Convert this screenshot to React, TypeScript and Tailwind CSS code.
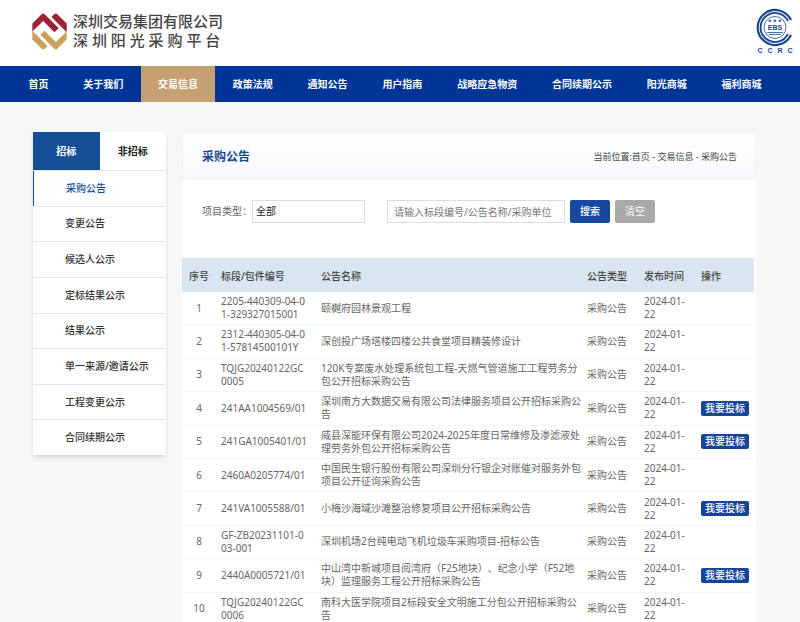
const navItems = [
  "首页",
  "关于我们",
  "交易信息",
  "政策法规",
  "通知公告",
  "用户指南",
  "战略应急物资",
  "合同续期公示",
  "阳光商城",
  "福利商城",
];

const sideItems = [
  "采购公告",
  "变更公告",
  "候选人公示",
  "定标结果公示",
  "结果公示",
  "单一来源/邀请公示",
  "工程变更公示",
  "合同续期公示",
];

type Notice = {
  code: string;
  name: string;
  open?: boolean;
};

const notices: Notice[] = [
  { code: "2205-440309-04-01-329327015001", name: "颐樾府园林景观工程" },
  { code: "2312-440305-04-01-57814500101Y", name: "深创投广场塔楼四楼公共食堂项目精装修设计" },
  { code: "TQJG20240122GC0005", name: "120K专案废水处理系统包工程-天燃气管道施工工程劳务分包公开招标采购公告" },
  { code: "241AA1004569/01", name: "深圳南方大数据交易有限公司法律服务项目公开招标采购公告", open: true },
  { code: "241GA1005401/01", name: "威县深能环保有限公司2024-2025年度日常维修及渗滤液处理劳务外包公开招标采购公告", open: true },
  { code: "2460A0205774/01", name: "中国民生银行股份有限公司深圳分行银企对账催对服务外包项目公开征询采购公告" },
  { code: "241VA1005588/01", name: "小梅沙海域沙滩整治修复项目公开招标采购公告", open: true },
  { code: "GF-ZB20231101-003-001", name: "深圳机场2台纯电动飞机垃圾车采购项目-招标公告" },
  { code: "2440A0005721/01", name: "中山湾中新城项目阅湾府（F25地块）、纪念小学（F52地块）监理服务工程公开招标采购公告", open: true },
  { code: "TQJG20240122GC0006", name: "南科大医学院项目2标段安全文明施工分包公开招标采购公告" },
];

function Logo() {
  return (
    <svg viewBox="0 0 104 112" className="h-[37px] w-[35px]" aria-hidden="true">
      <g fill="#9b2335">
        <path d="M0 32 30 2H36L80 46 67 58 33 24 0 56Z" />
        <path d="M58 12 68 2H74L104 32V58Z" />
      </g>
      <g fill="#c9a15a">
        <path d="M104 80 74 110H68L24 66 37 54 71 88 104 56Z" />
        <path d="M46 100 36 110H30L0 80V54Z" />
      </g>
    </svg>
  );
}

function CcrcBadge() {
  return (
    <svg viewBox="0 0 38 46" className="h-[46px] w-[38px]" role="img" aria-label="CCRC">
      <g fill="none" stroke="#17468f">
        <path strokeWidth="2.2" d="M35 12A17.5 17.5 0 1 0 35 27" />
        <path strokeWidth="1.8" d="M32 13A14.5 14.5 0 1 0 32 26" />
        <circle cx="19" cy="19.5" r="11" strokeWidth="0.8" />
      </g>
      <g fill="#17468f" fontFamily="Liberation Sans, sans-serif" fontWeight="bold" textAnchor="middle">
        <text x="19" y="14" fontSize="4">★ ★ ★</text>
        <text x="19" y="22" fontSize="7">EBS</text>
        <text x="4" y="45" fontSize="7">C</text>
        <text x="14" y="45" fontSize="7">C</text>
        <text x="24" y="45" fontSize="7">R</text>
        <text x="34" y="45" fontSize="7">C</text>
      </g>
      <path stroke="#17468f" strokeWidth="0.8" d="M11 24.5H27M13 26.5H25" />
    </svg>
  );
}

export default function App() {
  return (
    <div className="min-h-screen bg-[#f7f7f7] font-['Noto_Sans','Noto_Sans_CJK_SC',sans-serif] text-[10px] leading-[13px] text-[#666]">
      {/* ヘッダー */}
      <header className="flex items-center justify-between bg-white pt-2 pr-[6px] pb-3 pl-8">
        <div className="flex items-center gap-[6px]">
          <Logo />
          <div className="text-[15px] leading-[19px] font-medium text-[#444]">
            <p>深圳交易集团有限公司</p>
            <p>深 圳 阳 光 采 购 平 台</p>
          </div>
        </div>
        <CcrcBadge />
      </header>

      {/* ナビ */}
      <nav className="bg-[#003598] pr-[21px] pl-[11px]">
        <ul className="flex">
          {navItems.map((item) => (
            <li key={item} className="flex-auto">
              <a
                href="#"
                className={`block px-[17px] text-center leading-9 font-bold whitespace-nowrap text-white ${
                  item === "交易信息" ? "bg-[#c5a072]" : ""
                }`}
              >
                {item}
              </a>
            </li>
          ))}
        </ul>
      </nav>

      <div className="flex items-start gap-4 pt-[30px] pr-11 pl-[33px]">
        {/* サイドメニュー */}
        <aside className="w-[133px] shrink-0 bg-white shadow-md">
          <div className="grid grid-cols-2 font-bold">
            <button className="h-[38px] bg-[#154f97] text-white">招标</button>
            <button className="h-[38px] text-[#222]">非招标</button>
          </div>
          <ul className="grid h-[285px] auto-rows-fr font-medium">
            {sideItems.map((item, i) => (
              <li key={item} className="border-t border-[#e4e7ea]">
                <a
                  href="#"
                  className={`flex h-full items-center pl-8 ${
                    i === 0 ? "border-l border-[#154f97] text-[#154f97]" : "text-[#333]"
                  }`}
                >
                  {item}
                </a>
              </li>
            ))}
          </ul>
        </aside>

        <main className="min-w-0 flex-1 bg-white">
          <div className="flex h-12 items-center justify-between border border-[#f1f3f5] bg-linear-to-b from-white to-[#f5f8fc] pr-[18px] pl-[19px]">
            <h1 className="text-[12px] font-bold text-[#1c4a8f]">采购公告</h1>
            <p className="text-[9px] text-[#444]">当前位置:首页 - 交易信息 - 采购公告</p>
          </div>

          <form className="flex items-center pt-5 pb-[35px] pl-5">
            <label htmlFor="type" className="w-[50px]">
              项目类型：
            </label>
            <select id="type" className="h-[23px] w-[113px] appearance-none border border-[#ddd] px-[3px] text-[#222]">
              <option>全部</option>
            </select>
            <input
              type="text"
              aria-label="关键字"
              placeholder="请输入标段编号/公告名称/采购单位"
              className="ml-[22px] h-[23px] w-[178px] border border-[#ddd] px-[6px] placeholder:text-[#777]"
            />
            <button type="button" className="ml-[5px] h-[23px] w-10 rounded-xs bg-[#1549a0] font-medium text-white">
              搜索
            </button>
            <button type="button" className="ml-[5px] h-[23px] w-10 rounded-xs bg-[#a9a9a9] text-white">
              清空
            </button>
          </form>

          {/* 公告一覧 */}
          <div className="pr-[2px]">
            <table className="h-[368px] w-full table-fixed text-left">
              <thead className="bg-[#d9e5f0] text-[#444]">
                <tr className="h-[34px]">
                  <th className="w-[34px] pt-[2px] text-center font-medium">序号</th>
                  <th className="w-[100px] pt-[2px] pl-[5px] font-medium">标段/包件编号</th>
                  <th className="pt-[2px] pl-[5px] font-medium">公告名称</th>
                  <th className="w-[57px] pt-[2px] pl-[5px] font-medium">公告类型</th>
                  <th className="w-[57px] pt-[2px] pl-[5px] font-medium">发布时间</th>
                  <th className="w-[58px] pt-[2px] pl-[5px] font-medium">操作</th>
                </tr>
              </thead>
              <tbody>
                {notices.map((n, i) => (
                  <tr key={n.code} className="border-b border-[#f5f5f5]">
                    <td className="py-[3px] text-center">{i + 1}</td>
                    <td className="pr-2 pl-[5px] break-all">{n.code}</td>
                    <td className="pl-[5px] [text-spacing-trim:space-all]">{n.name}</td>
                    <td className="pl-[5px]">采购公告</td>
                    <td className="pr-2 pl-[5px]">2024-01-22</td>
                    <td className="pl-[5px]">
                      {n.open && (
                        <button className="block h-[15px] w-12 rounded-xs bg-[#15459a] font-medium text-white">
                          我要投标
                        </button>
                      )}
                    </td>
                  </tr>
                ))}
              </tbody>
            </table>
          </div>
        </main>
      </div>
    </div>
  );
}
